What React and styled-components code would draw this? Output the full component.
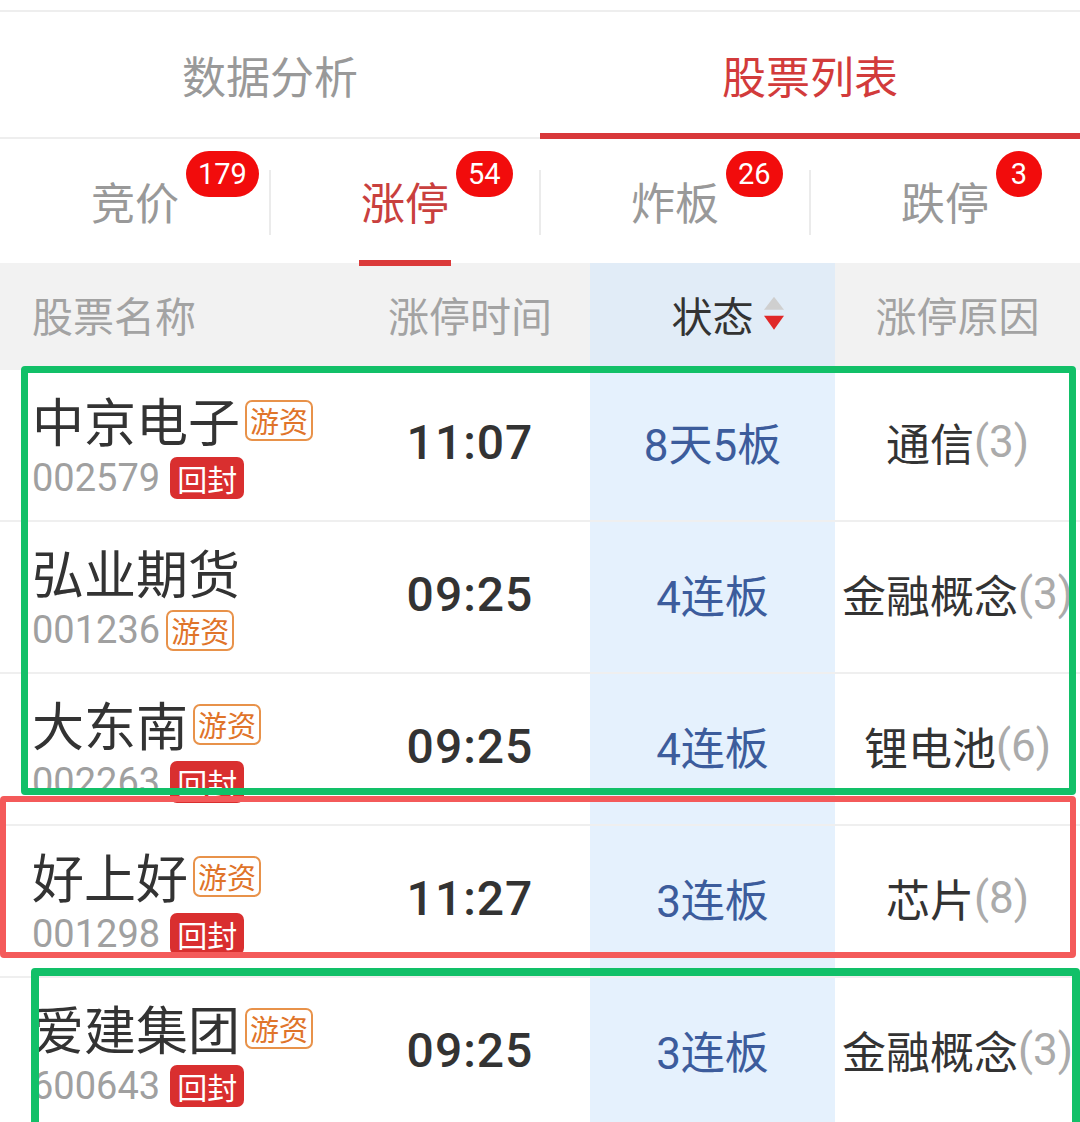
// Packages
import React from "react"
import styled, { createGlobalStyle } from "styled-components"

// Styles
const GlobalStyle = createGlobalStyle`
    html, body {
        margin: 0;
        padding: 0;
        background: #fff;
    }

    body {
        font-family: "Noto Sans CJK SC", "Noto Sans", sans-serif;
    }
`

const cols = "350px 240px 245px 245px"
const numFont = `"Roboto", "Noto Sans CJK SC", sans-serif`

const Page = styled.div`
    position: relative;
    width: 1080px;
    height: 1122px;
    overflow: hidden;
    background: #fff;
    padding-top: 10px;
    box-sizing: border-box;
`

const TopTabs = styled.nav`
    display: grid;
    grid-template-columns: 1fr 1fr;
    height: 125px;
    border-top: 2px solid #eeeeee;
    border-bottom: 2px solid #eeeeee;
`

const TopTab = styled.div`
    position: relative;
    display: flex;
    align-items: center;
    justify-content: center;
    font-size: 44px;
    color: ${p => (p.$active ? "#d23b3b" : "#999999")};

    &::after {
        content: "";
        display: ${p => (p.$active ? "block" : "none")};
        position: absolute;
        left: 0;
        right: 0;
        bottom: -2px;
        height: 6px;
        background: #d8383a;
    }
`

const SubTabs = styled.div`
    display: grid;
    grid-template-columns: repeat(4, 1fr);
    height: 124px;
`

const SubTab = styled.div`
    position: relative;
    display: flex;
    align-items: center;
    justify-content: center;

    &:not(:last-child)::after {
        content: "";
        position: absolute;
        right: -1px;
        top: 31px;
        width: 2px;
        height: 65px;
        background: #ebebeb;
    }
`

const SubLabel = styled.span`
    position: relative;
    font-size: 44px;
    line-height: 50px;
    color: ${p => (p.$active ? "#c9403e" : "#999999")};

    &::after {
        content: "";
        display: ${p => (p.$active ? "block" : "none")};
        position: absolute;
        left: -2px;
        right: -2px;
        bottom: -40px;
        height: 6px;
        background: #db3a3a;
    }
`

const Badge = styled.span`
    position: absolute;
    left: calc(100% + 7px);
    top: -25px;
    height: 46px;
    min-width: 46px;
    box-sizing: border-box;
    padding: 0 12px;
    border-radius: 23px;
    background: #f20c0c;
    color: #fff;
    font-family: ${numFont};
    font-size: 29px;
    line-height: 46px;
    text-align: center;
`

const HeadRow = styled.div`
    display: grid;
    grid-template-columns: ${cols};
    height: 107px;
    background: #f2f2f2;
`

const HeadCell = styled.div`
    display: flex;
    align-items: center;
    justify-content: ${p => (p.$left ? "flex-start" : "center")};
    padding-left: ${p => (p.$left ? "32px" : "0")};
    padding-bottom: 6px;
    font-size: 41px;
    color: ${p => (p.$active ? "#333333" : "#a3a3a3")};
    background: ${p => (p.$active ? "#e1ecf7" : "transparent")};
`

const SortWrap = styled.span`
    position: relative;
`

const SortIcon = styled.svg`
    position: absolute;
    left: calc(100% + 9px);
    top: 50%;
    transform: translateY(-52%);
`

const Row = styled.div`
    display: grid;
    grid-template-columns: ${cols};
    height: 152px;
    box-sizing: border-box;
    border-bottom: 2px solid #efefef;
`

const StockCell = styled.div`
    padding: 22px 0 0 32px;
`

const NameLine = styled.div`
    display: flex;
    align-items: center;
    gap: 5px;
    font-size: 52px;
    line-height: 56px;
    color: #333333;
    white-space: nowrap;
`

const CodeLine = styled.div`
    display: flex;
    align-items: center;
    gap: 6px;
    margin-top: 6px;
    height: 48px;
    font-family: ${numFont};
    font-size: 38px;
    color: #a0a0a0;
`

const Tag = styled.span`
    display: inline-block;
    box-sizing: border-box;
    height: ${p => (p.$fill ? "42px" : "41px")};
    padding: 0 ${p => (p.$fill ? "7px" : "3px")};
    margin-left: ${p => (p.$fill ? "4px" : "0")};
    border-radius: 7px;
    border: ${p => (p.$fill ? "none" : "2px solid #e8924a")};
    background: ${p => (p.$fill ? "#d92f2f" : "#fff")};
    color: ${p => (p.$fill ? "#fff" : "#e0742a")};
    font-family: "Noto Sans CJK SC", sans-serif;
    font-size: ${p => (p.$fill ? "30px" : "29px")};
    line-height: ${p => (p.$fill ? "42px" : "37px")};
`

const TimeCell = styled.div`
    display: flex;
    align-items: center;
    justify-content: center;
    padding-bottom: 6px;
    font-family: ${numFont};
    font-weight: 500;
    font-size: 48px;
    letter-spacing: 1px;
    color: #333333;
`

const StatusCell = styled.div`
    display: flex;
    align-items: center;
    justify-content: center;
    padding-bottom: 6px;
    background: #e5f1fd;
    font-family: ${numFont};
    font-size: 44px;
    color: #3c5c9c;
`

const ReasonCell = styled.div`
    display: flex;
    align-items: center;
    justify-content: center;
    padding-bottom: 6px;
    font-size: 44px;
    color: #333333;
    white-space: nowrap;
`

const Count = styled.span`
    font-family: ${numFont};
    color: #ababab;
`

const Frame = styled.div`
    position: absolute;
    left: ${p => p.$x}px;
    top: ${p => p.$y}px;
    width: ${p => p.$w}px;
    height: ${p => p.$h}px;
    box-sizing: border-box;
    border: ${p => p.$b}px solid ${p => p.$color};
    border-radius: 4px;
    pointer-events: none;
`

// Data
const subTabs = [
    { text: "竞价", count: 179 },
    { text: "涨停", count: 54, active: true },
    { text: "炸板", count: 26 },
    { text: "跌停", count: 3 },
]

const stocks = [
    { name: "中京电子", nameTag: true, code: "002579", codeTag: "回封", time: "11:07", status: "8天5板", reason: "通信", count: 3 },
    { name: "弘业期货", code: "001236", codeTag: "游资", time: "09:25", status: "4连板", reason: "金融概念", count: 3 },
    { name: "大东南", nameTag: true, code: "002263", codeTag: "回封", time: "09:25", status: "4连板", reason: "锂电池", count: 6 },
    { name: "好上好", nameTag: true, code: "001298", codeTag: "回封", time: "11:27", status: "3连板", reason: "芯片", count: 8 },
    { name: "爱建集团", nameTag: true, code: "600643", codeTag: "回封", time: "09:25", status: "3连板", reason: "金融概念", count: 3 },
]

const frames = [
    { x: 21, y: 366, w: 1055, h: 429, b: 7, color: "#12c068" },
    { x: 0, y: 796, w: 1076, h: 162, b: 6, color: "#f45a5a" },
    { x: 31, y: 968, w: 1049, h: 220, b: 8, color: "#12c068" },
]

function App() {
    return (
        <Page>
            <GlobalStyle />

            <TopTabs>
                <TopTab>数据分析</TopTab>
                <TopTab $active>股票列表</TopTab>
            </TopTabs>

            <SubTabs>
                {subTabs.map(tab => (
                    <SubTab key={tab.text}>
                        <SubLabel $active={tab.active}>
                            {tab.text}
                            <Badge>{tab.count}</Badge>
                        </SubLabel>
                    </SubTab>
                ))}
            </SubTabs>

            <HeadRow>
                <HeadCell $left>股票名称</HeadCell>
                <HeadCell>涨停时间</HeadCell>
                <HeadCell $active>
                    <SortWrap>
                        状态
                        <SortIcon width="22" height="35" viewBox="0 0 22 35">
                            <polygon points="11,1 21,14 1,14" fill="#cfcfcf" />
                            <polygon points="1,20 21,20 11,34" fill="#e02828" />
                        </SortIcon>
                    </SortWrap>
                </HeadCell>
                <HeadCell>涨停原因</HeadCell>
            </HeadRow>

            {stocks.map(s => (
                <Row key={s.code}>
                    <StockCell>
                        <NameLine>
                            {s.name}
                            {s.nameTag && <Tag>游资</Tag>}
                        </NameLine>
                        <CodeLine>
                            {s.code}
                            <Tag $fill={s.codeTag === "回封"}>{s.codeTag}</Tag>
                        </CodeLine>
                    </StockCell>
                    <TimeCell>{s.time}</TimeCell>
                    <StatusCell>{s.status}</StatusCell>
                    <ReasonCell>
                        {s.reason}
                        <Count>({s.count})</Count>
                    </ReasonCell>
                </Row>
            ))}

            {frames.map((f, i) => (
                <Frame key={i} $x={f.x} $y={f.y} $w={f.w} $h={f.h} $b={f.b} $color={f.color} />
            ))}
        </Page>
    )
}

export default App
